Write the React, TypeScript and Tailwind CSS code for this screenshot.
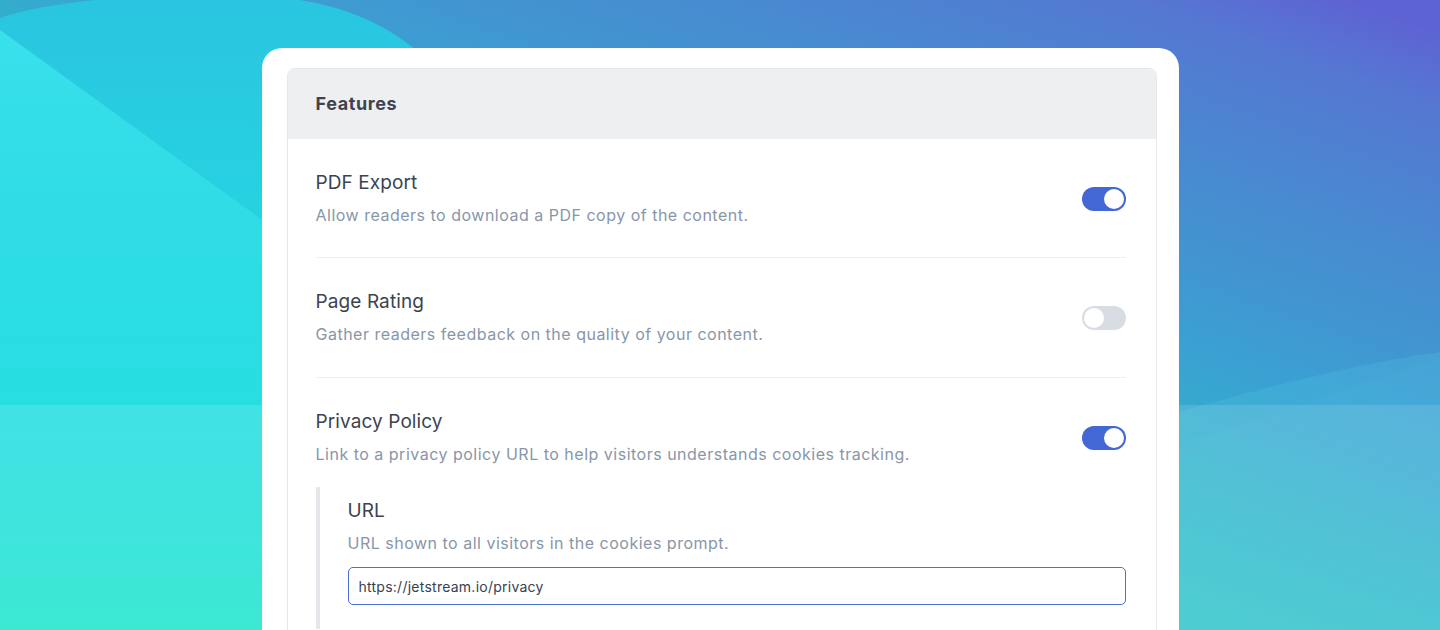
import React from "react";

function Toggle({ on }: { on: boolean }) {
  return (
    <div
      className={
        on
          ? "flex h-6 w-11 shrink-0 items-center justify-end rounded-full bg-[#4467d6] p-[2px]"
          : "flex h-6 w-11 shrink-0 items-center justify-start rounded-full bg-[#d8dde3] p-[2px]"
      }
    >
      <div className="h-5 w-5 rounded-full bg-white" />
    </div>
  );
}

function Background() {
  return (
    <svg
      className="absolute inset-0 h-full w-full"
      viewBox="0 0 1440 630"
      preserveAspectRatio="none"
    >
      <defs>
        <linearGradient id="base" gradientUnits="userSpaceOnUse" x1="1100" y1="700" x2="1350" y2="0">
          <stop offset="0" stopColor="#26cfc2" />
          <stop offset="0.25" stopColor="#2cbcc6" />
          <stop offset="0.5" stopColor="#3b9fd3" />
          <stop offset="0.6" stopColor="#4295d0" />
          <stop offset="0.75" stopColor="#4a87d0" />
          <stop offset="0.9" stopColor="#5578d2" />
          <stop offset="1" stopColor="#5e63d4" />
        </linearGradient>
        <linearGradient id="blob" x1="0" y1="0" x2="0" y2="1">
          <stop offset="0" stopColor="#2ac5e0" />
          <stop offset="0.6" stopColor="#24dce0" />
          <stop offset="1" stopColor="#20e6cc" />
        </linearGradient>
        <linearGradient id="wedge" x1="0" y1="0" x2="0" y2="1">
          <stop offset="0" stopColor="#3ae4ec" stopOpacity="0.9" />
          <stop offset="0.6" stopColor="#2ee0e6" stopOpacity="0.4" />
          <stop offset="1" stopColor="#2ee0e6" stopOpacity="0" />
        </linearGradient>
      </defs>
      <rect x="0" y="0" width="1440" height="630" fill="url(#base)" />
      <path
        d="M0,18 C70,-6 220,-10 300,0 C370,12 420,40 470,110 C520,190 550,300 560,400 L560,630 L0,630 Z"
        fill="url(#blob)"
      />
      <path d="M0,30 L320,262 L320,630 L0,630 Z" fill="url(#wedge)" />
      <path
        d="M1150,420 C1250,392 1340,366 1440,352 L1440,630 L1150,630 Z"
        fill="#5fd0ea"
        opacity="0.18"
      />
      <path
        d="M1150,452 C1260,420 1350,388 1440,356 L1440,630 L1150,630 Z"
        fill="#5fd0ea"
        opacity="0.06"
      />
      <rect x="0" y="405" width="1440" height="225" fill="#ffffff" opacity="0.12" />
    </svg>
  );
}

export default function App() {
  return (
    <div className="relative h-[630px] overflow-hidden font-[Inter,sans-serif]">
      <Background />

      <div className="relative flex justify-center pt-12">
        <div className="w-[917px] rounded-[20px] bg-white pl-[25px] pr-[22px] pt-5">
          <div className="overflow-hidden rounded-lg border border-[#e5e7eb]">
            {/* Header */}
            <div className="flex h-[70px] items-center bg-[#eeeff1] px-7">
              <h2 className="text-lg font-bold tracking-[0.6px] text-[#3e444e]">Features</h2>
            </div>

            {/* Rows */}
            <div className="pl-7 pr-[30px]">
              <div className="flex items-center justify-between border-b border-[#eef0f2] pt-8 pb-[30px]">
                <div>
                  <div className="text-[19px] leading-6 tracking-[0.1px] text-[#3c4350]">PDF Export</div>
                  <div className="mt-2 text-base leading-6 tracking-[0.5px] text-[#8896a8]">
                    Allow readers to download a PDF copy of the content.
                  </div>
                </div>
                <Toggle on />
              </div>

              <div className="flex items-center justify-between border-b border-[#eef0f2] pt-8 pb-[31px]">
                <div>
                  <div className="text-[19px] leading-6 tracking-[0.1px] text-[#3c4350]">Page Rating</div>
                  <div className="mt-2 text-base leading-6 tracking-[0.5px] text-[#8896a8]">
                    Gather readers feedback on the quality of your content.
                  </div>
                </div>
                <Toggle on={false} />
              </div>

              <div className="pt-8 pb-8">
                <div className="flex items-center justify-between">
                  <div>
                    <div className="text-[19px] leading-6 tracking-[0.1px] text-[#3c4350]">Privacy Policy</div>
                    <div className="mt-2 text-base leading-6 tracking-[0.5px] text-[#8896a8]">
                      Link to a privacy policy URL to help visitors understands cookies tracking.
                    </div>
                  </div>
                  <Toggle on />
                </div>

                {/* Nested URL field */}
                <div className="mt-[21px] border-l-4 border-[#e5e7eb] pl-7 pt-3 pb-6">
                  <div className="text-[19px] leading-6 tracking-[0.1px] text-[#3c4350]">URL</div>
                  <div className="mt-2 text-base leading-6 tracking-[0.5px] text-[#8896a8]">
                    URL shown to all visitors in the cookies prompt.
                  </div>
                  <input
                    readOnly
                    value="https://jetstream.io/privacy"
                    className="mt-3 h-[38px] w-full rounded-[5px] border border-[#4a6fd8] px-[10px] text-sm tracking-[0.25px] text-[#374151] outline-none"
                  />
                </div>
              </div>
            </div>
          </div>
        </div>
      </div>
    </div>
  );
}
